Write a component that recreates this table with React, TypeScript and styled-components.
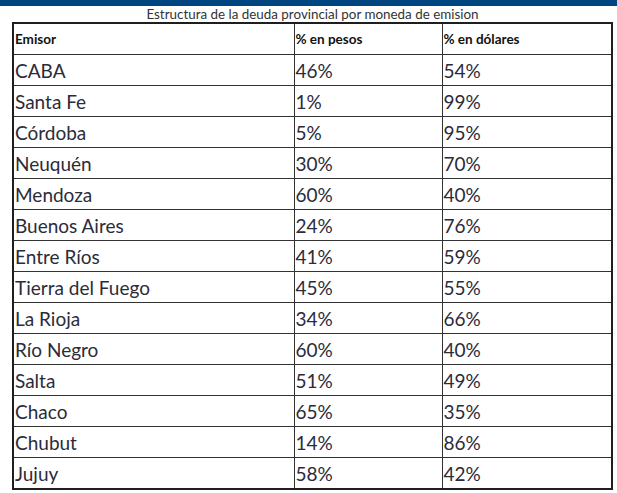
import React from "react";
import styled, { createGlobalStyle } from "styled-components";

const GlobalStyle = createGlobalStyle`
  body {
    margin: 0;
    background: #fff;
    font-family: Lato, "Liberation Sans", sans-serif;
  }
`;

const TopBar = styled.div`
  height: 6px;
  background: #00457f;
`;

const Wrapper = styled.main`
  padding: 0 6px 0 12px;
`;

const Table = styled.table`
  width: 599px;
  border-collapse: collapse;
  border: 2px solid #1e1e1e;
  table-layout: fixed;
`;

const Caption = styled.caption`
  font-size: 13.4px;
  line-height: 16px;
  color: #333;
  text-align: center;
  white-space: nowrap;
`;

const HeadCell = styled.th`
  border: 1px solid #333;
  height: 30px;
  padding: 0 1px;
  text-align: left;
  font-size: 13.5px;
  font-weight: 700;
  color: #111;
`;

const Cell = styled.td`
  border: 1px solid #333;
  height: 30px;
  padding: 0 1px;
  font-size: 19px;
  color: #2b2b3a;
`;

interface Row {
  emisor: string;
  pesos: string;
  dolares: string;
}

const rows: Row[] = [
  { emisor: "CABA", pesos: "46%", dolares: "54%" },
  { emisor: "Santa Fe", pesos: "1%", dolares: "99%" },
  { emisor: "Córdoba", pesos: "5%", dolares: "95%" },
  { emisor: "Neuquén", pesos: "30%", dolares: "70%" },
  { emisor: "Mendoza", pesos: "60%", dolares: "40%" },
  { emisor: "Buenos Aires", pesos: "24%", dolares: "76%" },
  { emisor: "Entre Ríos", pesos: "41%", dolares: "59%" },
  { emisor: "Tierra del Fuego", pesos: "45%", dolares: "55%" },
  { emisor: "La Rioja", pesos: "34%", dolares: "66%" },
  { emisor: "Río Negro", pesos: "60%", dolares: "40%" },
  { emisor: "Salta", pesos: "51%", dolares: "49%" },
  { emisor: "Chaco", pesos: "65%", dolares: "35%" },
  { emisor: "Chubut", pesos: "14%", dolares: "86%" },
  { emisor: "Jujuy", pesos: "58%", dolares: "42%" },
];

const App = () => {
  return (
    <>
      <GlobalStyle />
      <TopBar />
      <Wrapper>
        <Table>
          <Caption>Estructura de la deuda provincial por moneda de emision</Caption>
          <colgroup>
            <col style={{ width: 281 }} />
            <col style={{ width: 148 }} />
            <col style={{ width: 170 }} />
          </colgroup>
          <thead>
            <tr>
              <HeadCell>Emisor</HeadCell>
              <HeadCell>% en pesos</HeadCell>
              <HeadCell>% en dólares</HeadCell>
            </tr>
          </thead>
          <tbody>
            {rows.map((row) => (
              <tr key={row.emisor}>
                <Cell>{row.emisor}</Cell>
                <Cell>{row.pesos}</Cell>
                <Cell>{row.dolares}</Cell>
              </tr>
            ))}
          </tbody>
        </Table>
      </Wrapper>
    </>
  );
};

export default App;
